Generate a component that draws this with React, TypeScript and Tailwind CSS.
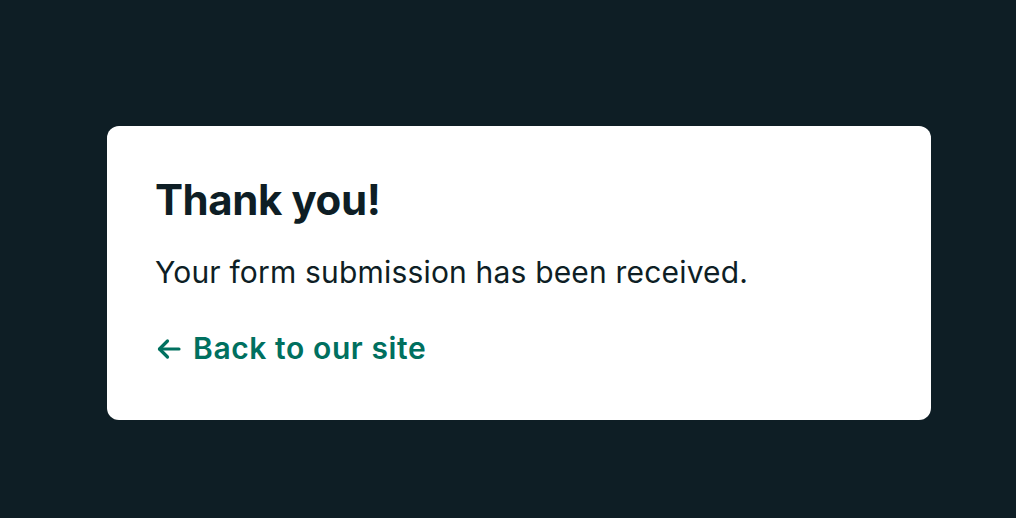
import React from 'react';

export default function App() {
  return (
    <div className="min-h-screen w-full bg-[#0e1e25] pt-[126px] pl-[107px]" style={{ fontFamily: 'Inter, "Noto Sans", sans-serif' }}>
      <div className="w-[824px] h-[294px] bg-white rounded-xl px-12 pt-[49px]">
        <h1 className="text-[42px] leading-[50px] font-bold text-[#0e1e25] tracking-[-0.01em]">Thank you!</h1>
        <p className="mt-[26px] text-[30px] leading-[42px] text-[#0e1e25] tracking-[0.006em]">Your form submission has been received.</p>
        <a href="#" className="mt-[34px] flex items-center text-[30px] leading-[42px] font-semibold text-[#00705f] tracking-[0.02em]">
          <svg width="26" height="24" viewBox="0 0 26 24" className="ml-[1px] mr-[11px] mt-[2px]" fill="none" stroke="currentColor" strokeWidth="3.2" strokeLinecap="round" strokeLinejoin="round">
            <path d="M23 12H3.5" />
            <path d="M11.5 4L3.5 12L11.5 20" />
          </svg>
          Back to our site
        </a>
      </div>
    </div>
  );
}
